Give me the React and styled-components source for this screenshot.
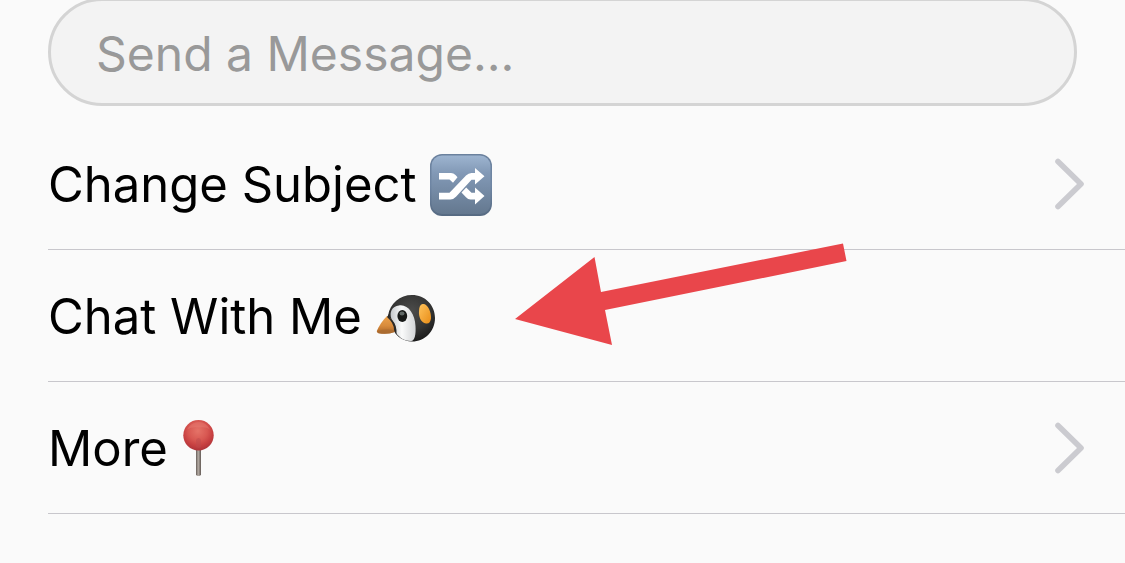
import React from "react";
import styled, { createGlobalStyle } from "styled-components";

const GlobalStyle = createGlobalStyle`
  *, *::before, *::after { box-sizing: border-box; }
  body {
    margin: 0;
    background: #fafafa;
    color: #000;
    font-family: Inter, "Liberation Sans", sans-serif;
    font-size: 49px;
    line-height: 60px;
    overflow-x: hidden;
  }
`;

const Panel = styled.main`
  display: flex;
  flex-direction: column;
  gap: 12px;
  margin-top: -2px;
  padding-left: 48px;
`;

const Composer = styled.form`
  display: flex;
  padding-right: 48px;
`;

const MessageInput = styled.input`
  flex: 1;
  min-width: 0;
  height: 108px;
  padding: 3px 45px 0;
  border: 3px solid #d4d4d4;
  border-radius: 54px;
  background: #f3f3f3;
  color: #000;
  font: inherit;
  font-size: 48px;
  outline: none;
  &::placeholder { color: #999; opacity: 1; }
`;

const Menu = styled.ul`
  margin: 0;
  padding: 0;
  list-style: none;
`;

const MenuItem = styled.li`
  position: relative;
  border-bottom: 1px solid #c8c7cc;
`;

const MenuButton = styled.button`
  display: flex;
  align-items: center;
  justify-content: space-between;
  width: 100%;
  height: 131px;
  padding: 0 40px 0 0;
  border: 0;
  background: transparent;
  color: inherit;
  font: inherit;
  text-align: left;
  cursor: pointer;
`;

const Title = styled.span`
  display: flex;
  align-items: center;
  gap: 12px;
  padding-top: 2px;
  white-space: nowrap;
`;

const Emoji = styled.svg`
  flex: none;
  width: 64px;
  height: 64px;
`;

const ChevronIcon = styled.svg`
  flex: none;
  width: 32px;
  height: 54px;
`;

const Pointer = styled.svg`
  position: absolute;
  top: -8px;
  left: 466px;
  width: 336px;
  height: 106px;
  pointer-events: none;
`;

const Chevron = () => (
  <ChevronIcon viewBox="0 0 32 54" aria-hidden="true">
    <path d="M5 4.5 28 27 5 49.5" fill="none" stroke="#cbcbd0" strokeWidth="5.6" strokeLinecap="round" strokeLinejoin="round" />
  </ChevronIcon>
);

const Shuffle = () => (
  <Emoji viewBox="0 0 64 64" aria-hidden="true">
    <defs>
      <linearGradient id="tile" x2="0" y2="1">
        <stop offset="0" stopColor="#9db4d0" />
        <stop offset=".3" stopColor="#8299b6" />
        <stop offset="1" stopColor="#64788f" />
      </linearGradient>
      <linearGradient id="tileEdge" x2="0" y2="1">
        <stop offset="0" stopColor="#6b819d" />
        <stop offset=".5" stopColor="#6f86a4" />
        <stop offset="1" stopColor="#566a82" />
      </linearGradient>
    </defs>
    <rect x="1" y="1" width="62" height="62" rx="12" fill="url(#tileEdge)" />
    <rect x="2.5" y="2.5" width="59" height="58.5" rx="10.5" fill="url(#tile)" />
    <g fill="#fff">
      <path d="M10 20H22Q24.5 20 26.5 22L28.5 24.3 24 29.7 20.5 26.5H10Z" />
      <path d="M10 39.8H20.5L37 22.5Q39.5 20 42.5 20H46V15L55.5 23.3 46 31.5V26.8H42.5L27 43.8Q24.5 46.5 21.5 46.5H10Z" />
      <path d="M37.2 34.5 42.5 39.8H46V34.5L55.5 43 46 51.5V46.5H41.5Q39 46.5 37 44.3L32.5 39.5Z" />
    </g>
  </Emoji>
);

const Penguin = () => (
  <Emoji viewBox="0 0 64 64" aria-hidden="true">
    <defs>
      <radialGradient id="head" cx=".5" cy=".35" r=".65">
        <stop offset="0" stopColor="#4c4c4b" />
        <stop offset=".6" stopColor="#353534" />
        <stop offset="1" stopColor="#1a1a1a" />
      </radialGradient>
      <linearGradient id="face" x2="1" y2="0">
        <stop offset="0" stopColor="#c5c8cc" />
        <stop offset=".45" stopColor="#fafbfb" />
        <stop offset="1" stopColor="#d2d4d6" />
      </linearGradient>
      <linearGradient id="beak" x2="0" y2="1">
        <stop offset="0" stopColor="#eda34c" />
        <stop offset=".55" stopColor="#d88b3c" />
        <stop offset="1" stopColor="#a86224" />
      </linearGradient>
      <linearGradient id="patch" x2="1" y2="1">
        <stop offset="0" stopColor="#ffc35c" />
        <stop offset="1" stopColor="#e88c16" />
      </linearGradient>
    </defs>
    <path d="M14 31C16 18 26 10 38 10 51 10 61 20 61 33 61 46 51 56.5 38 56.5 29 56 23 52 20 46L15 40Z" fill="url(#head)" />
    <path d="M17.5 34C15 27 18 21.5 25 20.5 34 19 41 29 41.5 41 42 49 41 56 37 56 29 56 23.5 51 21 46 22 41 19.5 37 17.5 34Z" fill="url(#face)" />
    <path d="M13 31C8 36 5 41 2.8 46Q2.5 47.5 4.5 48.2 14 50 22 46.5C22.5 40 18 34 13 31Z" fill="url(#beak)" />
    <path d="M4 46Q12 43.5 21 45.5L20 47.2Q13 49.5 5 48.3Q3 48 4 46Z" fill="#a96c32" opacity=".8" />
    <path d="M15 29Q14.5 32 18 35 23 40 22.5 49 20.5 47 20 45 20 38 13 32Z" fill="#292928" />
    <ellipse cx="28.3" cy="31" rx="4.9" ry="6" fill="#171918" />
    <ellipse cx="28" cy="28.5" rx="2.5" ry="2" fill="#606866" />
    <path d="M48.5 19C53.5 18 57.5 27 57 33.5 56.5 37 55 39 52 38.5 47 37.5 44.5 32 45 26 45.3 22 46 19.5 48.5 19Z" fill="url(#patch)" />
  </Emoji>
);

const Pushpin = () => (
  <Emoji viewBox="0 0 64 64" aria-hidden="true">
    <defs>
      <radialGradient id="pin" cx=".48" cy=".36" r=".62">
        <stop offset="0" stopColor="#e57368" />
        <stop offset=".5" stopColor="#d85852" />
        <stop offset=".8" stopColor="#c63f40" />
        <stop offset="1" stopColor="#b2363b" />
      </radialGradient>
      <linearGradient id="metal" x2="1" y2="0">
        <stop offset="0" stopColor="#655c57" />
        <stop offset=".45" stopColor="#b5aca5" />
        <stop offset="1" stopColor="#625954" />
      </linearGradient>
    </defs>
    <path d="M16 32H21V58Q18.5 60 16 58Z" fill="url(#metal)" />
    <circle cx="18.5" cy="18.2" r="15.2" fill="url(#pin)" />
    <path d="M7 12.5Q11 5 19 5 26 5 30 12.5 26 9.5 19 10.5 12 9.5 7 12.5Z" fill="#f08b80" opacity=".3" />
    <path d="M16 23Q18.5 19 21 23V30Q18.5 32 16 30Z" fill="#bd494b" opacity=".5" />
  </Emoji>
);

const Arrow = () => (
  <Pointer viewBox="0 0 336 106" aria-hidden="true">
    <path d="M1 77 80.5 15 87 50 329 1.5 332.5 19 91 68 98 103Z" fill="#e9464b" />
  </Pointer>
);

const items = [
  { label: "Change Subject", icon: <Shuffle />, chevron: true },
  { label: "Chat With Me", icon: <Penguin />, pointer: true },
  { label: "More", icon: <Pushpin />, chevron: true },
];

export default function App() {
  return (
    <>
      <GlobalStyle />
      <Panel>
        <Composer onSubmit={(e) => e.preventDefault()}>
          <MessageInput type="text" aria-label="Message" placeholder="Send a Message..." />
        </Composer>
        <Menu>
          {items.map((item) => (
            <MenuItem key={item.label}>
              <MenuButton type="button">
                <Title>
                  {item.label}
                  {item.icon}
                </Title>
                {item.chevron && <Chevron />}
              </MenuButton>
              {item.pointer && <Arrow />}
            </MenuItem>
          ))}
        </Menu>
      </Panel>
    </>
  );
}
